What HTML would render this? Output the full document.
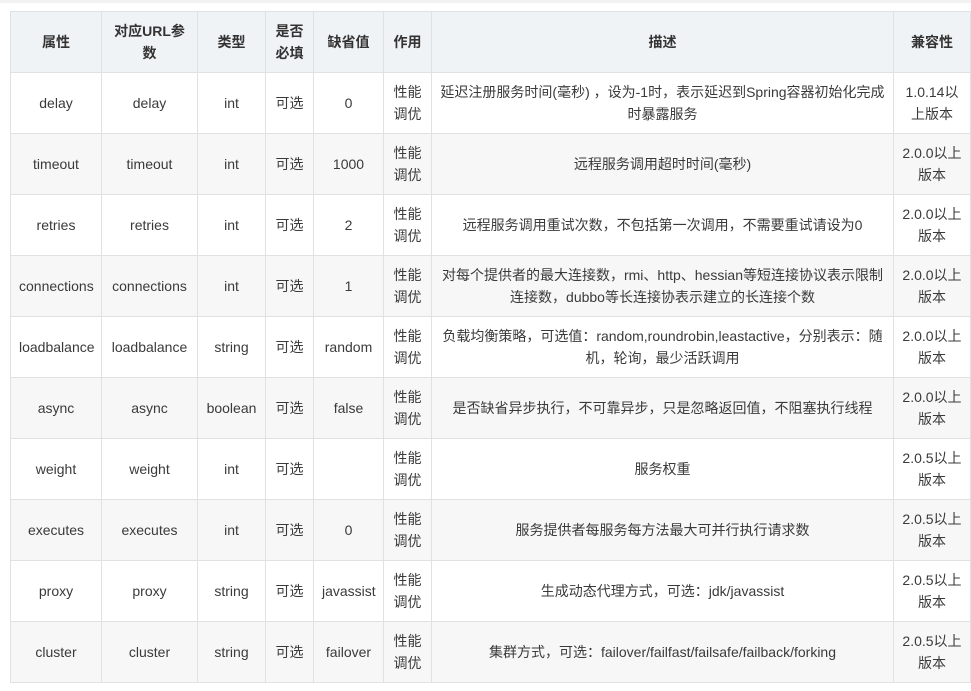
<!DOCTYPE html>
<html><head><meta charset="utf-8"><style>
body{margin:0;background:#fff;width:971px;height:691px;overflow:hidden;font-family:"Liberation Sans","Noto Sans CJK SC",sans-serif;font-size:14px;color:#3a3a3a}
.top{position:absolute;left:0;top:0;width:971px;height:3px;background:#f2f2f2}
table{position:absolute;left:10px;top:11px;border-collapse:collapse;table-layout:fixed;width:960px}
td,th{border:1px solid #dfe2e5;text-align:center;vertical-align:middle;line-height:22px;padding:0 8px;height:61px;box-sizing:border-box}
th{background:#f0f3f5;font-weight:bold;height:61px;color:#333}
tbody tr:nth-child(even) td{background:#f7f7f7}
</style></head><body><div class="top"></div>
<table>
<colgroup><col style="width:91px"><col style="width:96px"><col style="width:68px"><col style="width:48px"><col style="width:70px"><col style="width:48px"><col style="width:462px"><col style="width:77px"></colgroup>
<thead><tr><th>属性</th><th>对应URL参数</th><th>类型</th><th>是否必填</th><th>缺省值</th><th>作用</th><th>描述</th><th>兼容性</th></tr></thead>
<tbody>
<tr><td>delay</td><td>delay</td><td>int</td><td>可选</td><td>0</td><td>性能调优</td><td>延迟注册服务时间(毫秒) ，设为-1时，表示延迟到Spring容器初始化完成时暴露服务</td><td>1.0.14以上版本</td></tr>
<tr><td>timeout</td><td>timeout</td><td>int</td><td>可选</td><td>1000</td><td>性能调优</td><td>远程服务调用超时时间(毫秒)</td><td>2.0.0以上版本</td></tr>
<tr><td>retries</td><td>retries</td><td>int</td><td>可选</td><td>2</td><td>性能调优</td><td>远程服务调用重试次数，不包括第一次调用，不需要重试请设为0</td><td>2.0.0以上版本</td></tr>
<tr><td>connections</td><td>connections</td><td>int</td><td>可选</td><td>1</td><td>性能调优</td><td>对每个提供者的最大连接数，rmi、http、hessian等短连接协议表示限制连接数，dubbo等长连接协表示建立的长连接个数</td><td>2.0.0以上版本</td></tr>
<tr><td>loadbalance</td><td>loadbalance</td><td>string</td><td>可选</td><td>random</td><td>性能调优</td><td>负载均衡策略，可选值：random,roundrobin,leastactive，分别表示：随机，轮询，最少活跃调用</td><td>2.0.0以上版本</td></tr>
<tr><td>async</td><td>async</td><td>boolean</td><td>可选</td><td>false</td><td>性能调优</td><td>是否缺省异步执行，不可靠异步，只是忽略返回值，不阻塞执行线程</td><td>2.0.0以上版本</td></tr>
<tr><td>weight</td><td>weight</td><td>int</td><td>可选</td><td></td><td>性能调优</td><td>服务权重</td><td>2.0.5以上版本</td></tr>
<tr><td>executes</td><td>executes</td><td>int</td><td>可选</td><td>0</td><td>性能调优</td><td>服务提供者每服务每方法最大可并行执行请求数</td><td>2.0.5以上版本</td></tr>
<tr><td>proxy</td><td>proxy</td><td>string</td><td>可选</td><td>javassist</td><td>性能调优</td><td>生成动态代理方式，可选：jdk/javassist</td><td>2.0.5以上版本</td></tr>
<tr><td>cluster</td><td>cluster</td><td>string</td><td>可选</td><td>failover</td><td>性能调优</td><td>集群方式，可选：failover/failfast/failsafe/failback/forking</td><td>2.0.5以上版本</td></tr>
</tbody></table>
</body></html>
